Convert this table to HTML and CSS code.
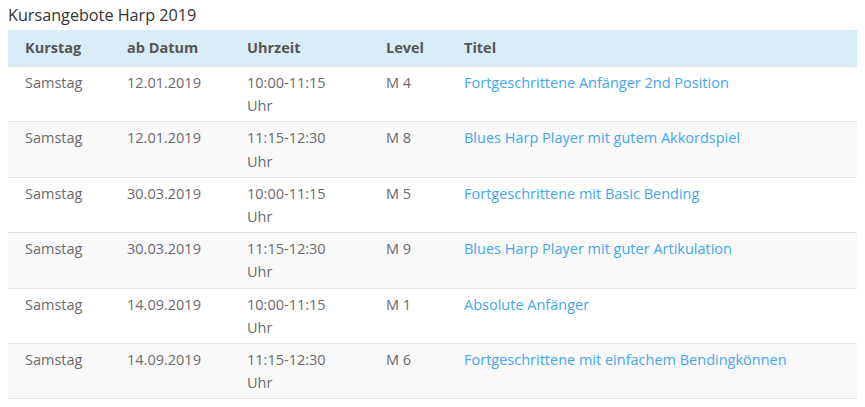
FILE: index.html
```html
<!DOCTYPE html>
<html lang="de">
<head>
<meta charset="utf-8">
<title>Kursangebote Harp 2019</title>
<link rel="stylesheet" href="styles.css">
</head>
<body>
<h3 class="caption">Kursangebote Harp 2019</h3>
<table class="courses">
  <colgroup>
    <col class="c-day"><col class="c-date"><col class="c-time"><col class="c-level"><col class="c-title">
  </colgroup>
  <thead>
    <tr><th>Kurstag</th><th>ab Datum</th><th>Uhrzeit</th><th>Level</th><th>Titel</th></tr>
  </thead>
  <tbody>
    <tr><td>Samstag</td><td>12.01.2019</td><td>10:00-11:15<br>Uhr</td><td>M 4</td><td><a href="#">Fortgeschrittene Anfänger 2nd Position</a></td></tr>
    <tr><td>Samstag</td><td>12.01.2019</td><td>11:15-12:30<br>Uhr</td><td>M 8</td><td><a href="#">Blues Harp Player mit gutem Akkordspiel</a></td></tr>
    <tr><td>Samstag</td><td>30.03.2019</td><td>10:00-11:15<br>Uhr</td><td>M 5</td><td><a href="#">Fortgeschrittene mit Basic Bending</a></td></tr>
    <tr><td>Samstag</td><td>30.03.2019</td><td>11:15-12:30<br>Uhr</td><td>M 9</td><td><a href="#">Blues Harp Player mit guter Artikulation</a></td></tr>
    <tr><td>Samstag</td><td>14.09.2019</td><td>10:00-11:15<br>Uhr</td><td>M 1</td><td><a href="#">Absolute Anfänger</a></td></tr>
    <tr><td>Samstag</td><td>14.09.2019</td><td>11:15-12:30<br>Uhr</td><td>M 6</td><td><a href="#">Fortgeschrittene mit einfachem Bendingkönnen</a></td></tr>
  </tbody>
</table>
</body>
</html>
```
FILE: styles.css
```css
html, body {
  margin: 0;
  padding: 0;
  background: #fff;
}
body {
  padding: 0 8px;
  font-family: "Open Sans", "Noto Sans", sans-serif;
  font-size: 14.5px;
  line-height: 23.2px;
  color: #6b6b6b;
}
.caption {
  margin: 0;
  padding-top: 4px;
  height: 26px;
  font-size: 16.2px;
  font-weight: 400;
  line-height: 22px;
  color: #333;
}
.courses {
  width: 100%;
  border-collapse: collapse;
  table-layout: fixed;
}
.c-day { width: 102px; }
.c-date { width: 120px; }
.c-time { width: 139px; }
.c-level { width: 78px; }
.courses th {
  background: #d9edf7;
  color: #555;
  font-weight: 700;
  text-align: left;
  padding: 6px 17px 6.8px;
  line-height: 23.2px;
}
.courses td {
  padding: 4px 17px 4px;
  vertical-align: top;
  border-top: 1px solid #e3e3e3;
}
.courses tbody tr:nth-child(even) td {
  background: #f9f9f9;
}
.courses tbody tr:last-child td {
  border-bottom: 1px solid #e3e3e3;
}
.courses a {
  color: #45a6f0;
  text-decoration: none;
}
```
